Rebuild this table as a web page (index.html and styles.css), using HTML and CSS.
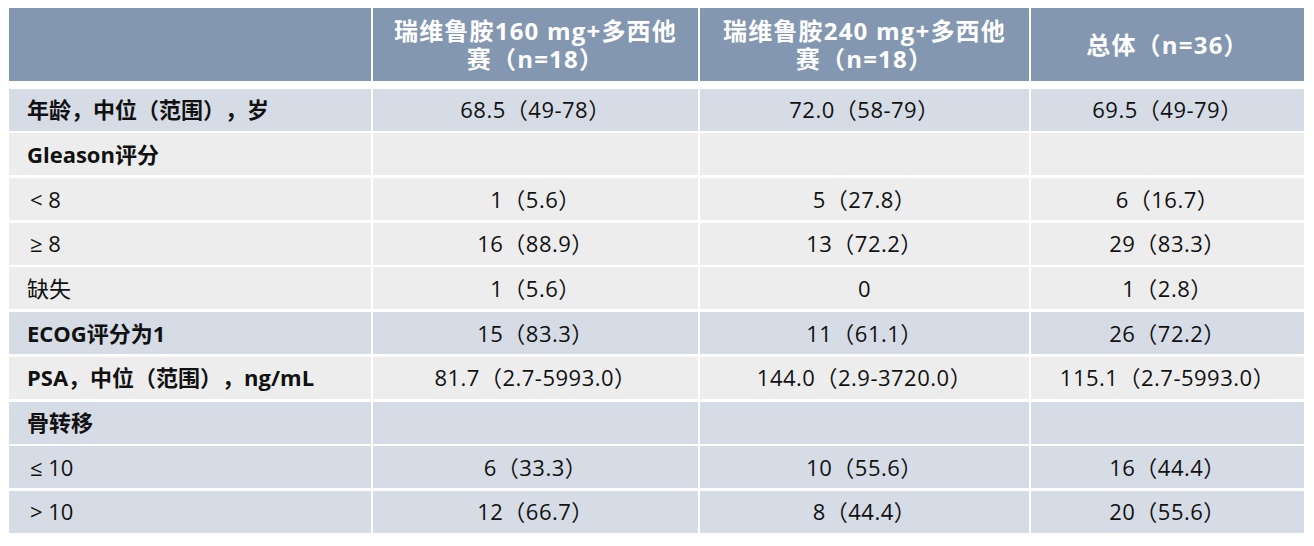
FILE: index.html
```html
<!DOCTYPE html>
<html lang="zh-CN">
<head>
<meta charset="utf-8">
<title>基线特征</title>
<link rel="stylesheet" href="styles.css">
</head>
<body>
<div class="page">
  <div class="grid">
    <div class="cell head"></div>
    <div class="cell head">瑞维鲁胺160 mg+多西他<br>赛（n=18）</div>
    <div class="cell head">瑞维鲁胺240 mg+多西他<br>赛（n=18）</div>
    <div class="cell head">总体（n=36）</div>

    <div class="cell blue label bold">年龄，中位（范围），岁</div>
    <div class="cell blue">68.5（49-78）</div>
    <div class="cell blue">72.0（58-79）</div>
    <div class="cell blue">69.5（49-79）</div>

    <div class="cell gray label bold">Gleason评分</div>
    <div class="cell gray"></div>
    <div class="cell gray"></div>
    <div class="cell gray"></div>

    <div class="cell gray label sym">&lt; 8</div>
    <div class="cell gray">1（5.6）</div>
    <div class="cell gray">5（27.8）</div>
    <div class="cell gray">6（16.7）</div>

    <div class="cell gray label sym">≥ 8</div>
    <div class="cell gray">16（88.9）</div>
    <div class="cell gray">13（72.2）</div>
    <div class="cell gray">29（83.3）</div>

    <div class="cell gray label">缺失</div>
    <div class="cell gray">1（5.6）</div>
    <div class="cell gray">0</div>
    <div class="cell gray">1（2.8）</div>

    <div class="cell blue label bold">ECOG评分为1</div>
    <div class="cell blue">15（83.3）</div>
    <div class="cell blue">11（61.1）</div>
    <div class="cell blue">26（72.2）</div>

    <div class="cell gray label bold">PSA，中位（范围），ng/mL</div>
    <div class="cell gray">81.7（2.7-5993.0）</div>
    <div class="cell gray">144.0（2.9-3720.0）</div>
    <div class="cell gray">115.1（2.7-5993.0）</div>

    <div class="cell blue label bold">骨转移</div>
    <div class="cell blue"></div>
    <div class="cell blue"></div>
    <div class="cell blue"></div>

    <div class="cell blue label sym">≤ 10</div>
    <div class="cell blue">6（33.3）</div>
    <div class="cell blue">10（55.6）</div>
    <div class="cell blue">16（44.4）</div>

    <div class="cell blue label sym">&gt; 10</div>
    <div class="cell blue">12（66.7）</div>
    <div class="cell blue">8（44.4）</div>
    <div class="cell blue">20（55.6）</div>
  </div>
</div>
</body>
</html>
```

FILE: styles.css
```css
html, body {
  margin: 0;
  padding: 0;
  background: #ffffff;
}

.page {
  padding: 8px 10px 0 9px;
  font-family: "Open Sans", "Noto Sans CJK SC", sans-serif;
  font-size: 22px;
  color: #111111;
  text-spacing-trim: space-all;
}

.grid {
  display: grid;
  grid-template-columns: 362px 325px 329px 273px;
  grid-template-rows: 78px repeat(10, 42px);
  column-gap: 2px;
  row-gap: 2.7px;
}

.cell {
  display: flex;
  align-items: center;
  justify-content: center;
  text-align: center;
  line-height: 27px;
  letter-spacing: 0.5px;
}

.head {
  background: #8497b0;
  color: #ffffff;
  font-weight: 700;
  font-size: 24px;
  line-height: 28px;
  letter-spacing: 1.2px;
  margin-bottom: 5px;
  padding-top: 1px;
}

.blue {
  background: #d6dce5;
}

.gray {
  background: #ededed;
}

.label {
  justify-content: flex-start;
  text-align: left;
  padding-left: 18px;
  letter-spacing: 0;
}

.sym {
  padding-left: 21px;
}

.bold {
  font-weight: 700;
}
```
